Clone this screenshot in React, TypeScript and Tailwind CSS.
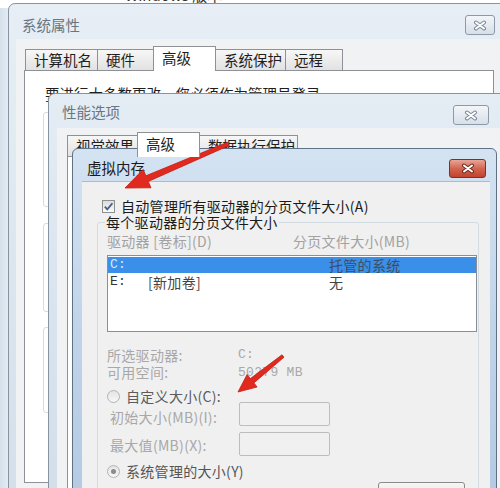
import React from "react";

const mono = "font-['Liberation_Mono',monospace]";

function GrayClose({ className }: { className: string }) {
  return (
    <div
      className={`${className} flex items-center justify-center rounded-[3px] border border-[#8d99a7] bg-linear-to-b from-[#f3f6f9] to-[#d7dfe8]`}
    >
      <svg width="14" height="11" viewBox="0 0 14 11">
        <path d="M3 2.5 L11 8.5 M11 2.5 L3 8.5" stroke="#7b8896" strokeWidth="4" strokeLinecap="round" />
        <path d="M3 2.5 L11 8.5 M11 2.5 L3 8.5" stroke="#ffffff" strokeWidth="2" strokeLinecap="round" />
      </svg>
    </div>
  );
}

function RedClose({ className }: { className: string }) {
  return (
    <div
      className={`${className} flex items-center justify-center rounded-[3px] border border-[#7a3226] bg-linear-to-b from-[#e9a597] via-[#d2654f] to-[#c2412c]`}
    >
      <svg width="14" height="11" viewBox="0 0 14 11">
        <path d="M3 2.5 L11 8.5 M11 2.5 L3 8.5" stroke="#6e2a20" strokeWidth="4" strokeLinecap="round" />
        <path d="M3 2.5 L11 8.5 M11 2.5 L3 8.5" stroke="#ffffff" strokeWidth="2" strokeLinecap="round" />
      </svg>
    </div>
  );
}

function Tab({ label, width, selected }: { label: string; width: string; selected?: boolean }) {
  return selected ? (
    <div
      className={`${width} relative z-10 -mb-px -ml-px h-[25px] border border-b-0 border-[#8e9196] bg-white pl-[8px] pt-[1px] text-[14.5px] leading-[20px] text-[#1e1e1e]`}
    >
      {label}
    </div>
  ) : (
    <div
      className={`${width} -ml-px h-[21px] border border-b-0 border-[#8e9196] bg-linear-to-b from-[#f7f7f7] to-[#e2e2e2] pl-[8px] text-[14.5px] leading-[20px] text-[#1e1e1e] first:ml-0`}
    >
      {label}
    </div>
  );
}

function Radio({ checked }: { checked?: boolean }) {
  return (
    <span className="flex h-[13px] w-[13px] shrink-0 items-center justify-center rounded-full border border-[#b3b3b3] bg-linear-to-b from-[#e4e4e4] to-[#f7f7f7]">
      {checked && <span className="h-[5px] w-[5px] rounded-full bg-[#8c8c8c]" />}
    </span>
  );
}

export default function App() {
  return (
    <div className="relative h-[488px] w-[500px] overflow-hidden bg-white font-['Noto_Sans_CJK_SC',sans-serif]">
      {/* whatever sits behind */}
      <div className="absolute left-[125px] top-[-14px] text-[15px] leading-[18px] text-[#333]">Windows 版本</div>
      <div className="absolute left-0 top-[8px] h-[480px] w-[9px] bg-linear-to-r from-[#d5e0ea] to-[#e6edf3]" />

      {/* 系统属性 */}
      <div className="absolute left-[8px] top-[3px] flex h-[500px] w-[510px] flex-col rounded-tl-[7px] border border-[#8593a3] bg-linear-to-b from-[#e7eef5] via-[#dde6ef] to-[#d5dfe9]">
        <div className="h-[35px] shrink-0 pl-[13px] pt-[11px] text-[14.5px] leading-[20px] text-[#6b7681]">系统属性</div>
        <GrayClose className="absolute left-[456px] top-[11px] h-[20px] w-[30px]" />
        <div className="ml-[7px] flex-1 bg-[#f0f2f4] pt-[7px]">
          <div className="flex h-[24px] items-end pl-[9px]">
            <Tab label="计算机名" width="w-[73px]" />
            <Tab label="硬件" width="w-[57px]" />
            <Tab label="高级" width="w-[63px]" selected />
            <Tab label="系统保护" width="w-[71px]" />
            <Tab label="远程" width="w-[58px]" />
          </div>
          <div className="ml-[8px] h-[413px] w-[470px] border border-[#8e9196] bg-white pl-[18px] pt-[13px]">
            <div className="pl-[2px] text-[14.5px] leading-[20px] text-[#1e1e1e]">要进行大多数更改，您必须作为管理员登录。</div>
            <div className="mt-[8px] h-[95px] w-[440px] rounded-[3px] border border-[#d3dde4]" />
            <div className="mt-[16px] h-[89px] w-[440px] rounded-[3px] border border-[#d3dde4]" />
            <div className="mt-[15px] h-[86px] w-[440px] rounded-[3px] border border-[#d3dde4]" />
          </div>
        </div>
      </div>

      {/* 性能选项 */}
      <div className="absolute left-[48px] top-[93px] flex h-[420px] w-[470px] flex-col rounded-tl-[7px] border border-[#8593a3] bg-linear-to-b from-[#e4ecf4] via-[#dae4ee] to-[#d3dee9]">
        <div className="h-[34px] shrink-0 pl-[13px] pt-[8px] text-[14.5px] leading-[20px] text-[#6b7681]">性能选项</div>
        <GrayClose className="absolute left-[404px] top-[11px] h-[20px] w-[36px]" />
        <div className="ml-[8px] flex-1 bg-[#f0f2f4] pt-[5px]">
          <div className="flex h-[23px] items-end pl-[10px]">
            <Tab label="视觉效果" width="w-[71px]" />
            <Tab label="高级" width="w-[63px]" selected />
            <Tab label="数据执行保护" width="w-[99px]" />
          </div>
          <div className="ml-[10px] h-[340px] w-[420px] border border-[#8e9196] bg-white" />
        </div>
      </div>

      {/* 虚拟内存 */}
      <div className="absolute left-[72px] top-[148px] flex h-[360px] w-[425px] flex-col rounded-t-[6px] border border-[#5f7184] bg-linear-to-b from-[#d4e3f2] via-[#c0d4e9] to-[#b3cae3]">
        <div className="h-[32px] shrink-0 pl-[14px] pt-[9px] text-[14.5px] leading-[20px] text-[#1a1a1a]">虚拟内存</div>
        <RedClose className="absolute left-[376px] top-[10px] h-[19px] w-[37px]" />
        <div className="ml-[9px] mr-[6px] flex-1 border-t border-[#a9bccf] bg-[#f0f0f0] text-[14px] tracking-[0.3px] text-[#1a1a1a]">
          <div className="mt-[15px] flex h-[18px] items-center gap-[6px] pl-[20px]">
            <span className="flex h-[13px] w-[13px] items-center justify-center border border-[#8e8f8f] bg-linear-to-b from-[#dcdcdc] to-[#fbfbfb]">
              <svg width="11" height="11" viewBox="0 0 11 11">
                <path d="M1.8 5.6 L4.3 8.4 L9.4 2.2" stroke="#4a5d85" strokeWidth="1.8" fill="none" />
              </svg>
            </span>
            <span className="leading-[18px]">自动管理所有驱动器的分页文件大小(A)</span>
          </div>

          <fieldset className="-mt-[3px] ml-[15px] h-[300px] w-[382px] rounded-[3px] border border-[#d3dbe2]">
            <legend className="ml-[7px] px-[1px] leading-[20px]">每个驱动器的分页文件大小</legend>

            <div className="flex h-[18px] items-center pl-[9px] leading-[18px] text-[#a2a2a2]">
              <span className="w-[186px]">驱动器 [卷标](D)</span>
              <span>分页文件大小(MB)</span>
            </div>

            <div className="ml-[9px] mt-[5px] h-[77px] w-[370px] border border-[#8a8f97] bg-white pt-px">
              <div className="flex h-[16px] items-center bg-[#3a8fe8] pl-[2px] leading-[16px]">
                <span className={`${mono} w-[219px] text-[13px] text-[#dce9f8]`}>C:</span>
                <span className="text-[#3e4d63]">托管的系统</span>
              </div>
              <div className="flex h-[18px] items-center pl-[2px] leading-[18px]">
                <span className={`${mono} w-[38px] text-[13px] text-[#333]`}>E:</span>
                <span className="w-[181px] text-[#444]">[新加卷]</span>
                <span className="text-[#444]">无</span>
              </div>
            </div>

            <div className="mt-[14px] flex h-[18px] items-center pl-[9px] leading-[18px] text-[#a8a8a8]">
              <span className="w-[131px]">所选驱动器:</span>
              <span className={`${mono} text-[13px]`}>C:</span>
            </div>
            <div className="flex h-[17px] items-center pl-[9px] leading-[17px] text-[#a8a8a8]">
              <span className="w-[131px]">可用空间:</span>
              <span className={`${mono} text-[13px]`}>50279 MB</span>
            </div>

            <div className="mt-[8px] flex h-[14px] items-center gap-[6px] pl-[9px] leading-[18px] text-[#5c5c5c]">
              <Radio />
              <span>自定义大小(C):</span>
            </div>

            <div className="-mt-[1px] flex h-[24px] items-start pl-[12px] text-[#a8a8a8]">
              <span className="mt-[6px] w-[129px] leading-[18px]">初始大小(MB)(I):</span>
              <span className="h-[24px] w-[91px] rounded-[2px] border border-[#bdbdbd] bg-[#f0f0f0]" />
            </div>
            <div className="mt-[6px] flex h-[24px] items-start pl-[12px] text-[#a8a8a8]">
              <span className="mt-[4px] w-[129px] leading-[18px]">最大值(MB)(X):</span>
              <span className="h-[24px] w-[91px] rounded-[2px] border border-[#bdbdbd] bg-[#f0f0f0]" />
            </div>

            <div className="mt-[8px] flex h-[14px] items-center gap-[6px] pl-[9px] leading-[18px] text-[#555]">
              <Radio checked />
              <span>系统管理的大小(Y)</span>
            </div>

            <div className="ml-[280px] mt-[4px] flex h-[23px] w-[87px] items-center justify-center rounded-[3px] border border-[#8a8a8a] bg-linear-to-b from-[#f6f6f6] to-[#dedede] text-[13px] leading-[18px] text-[#666]">
              设置(S)...
            </div>
          </fieldset>
        </div>
      </div>

      {/* red arrows */}
      <svg className="pointer-events-none absolute left-0 top-0" width="500" height="488" viewBox="0 0 500 488">
        <polygon
          points="228.7,145.7 148.3,181.4 151,187.8 125,188 143.2,169.4 145.9,175.8 227.3,142.3"
          fill="#e12a1f"
          stroke="#c81d14"
          strokeWidth="0.8"
          strokeLinejoin="round"
        />
        <polygon
          points="284,357.2 253.9,382.9 257.1,387 238,392 247.1,374.5 250.4,378.6 282,354.8"
          fill="#e12a1f"
          stroke="#c81d14"
          strokeWidth="0.8"
          strokeLinejoin="round"
        />
      </svg>
    </div>
  );
}
